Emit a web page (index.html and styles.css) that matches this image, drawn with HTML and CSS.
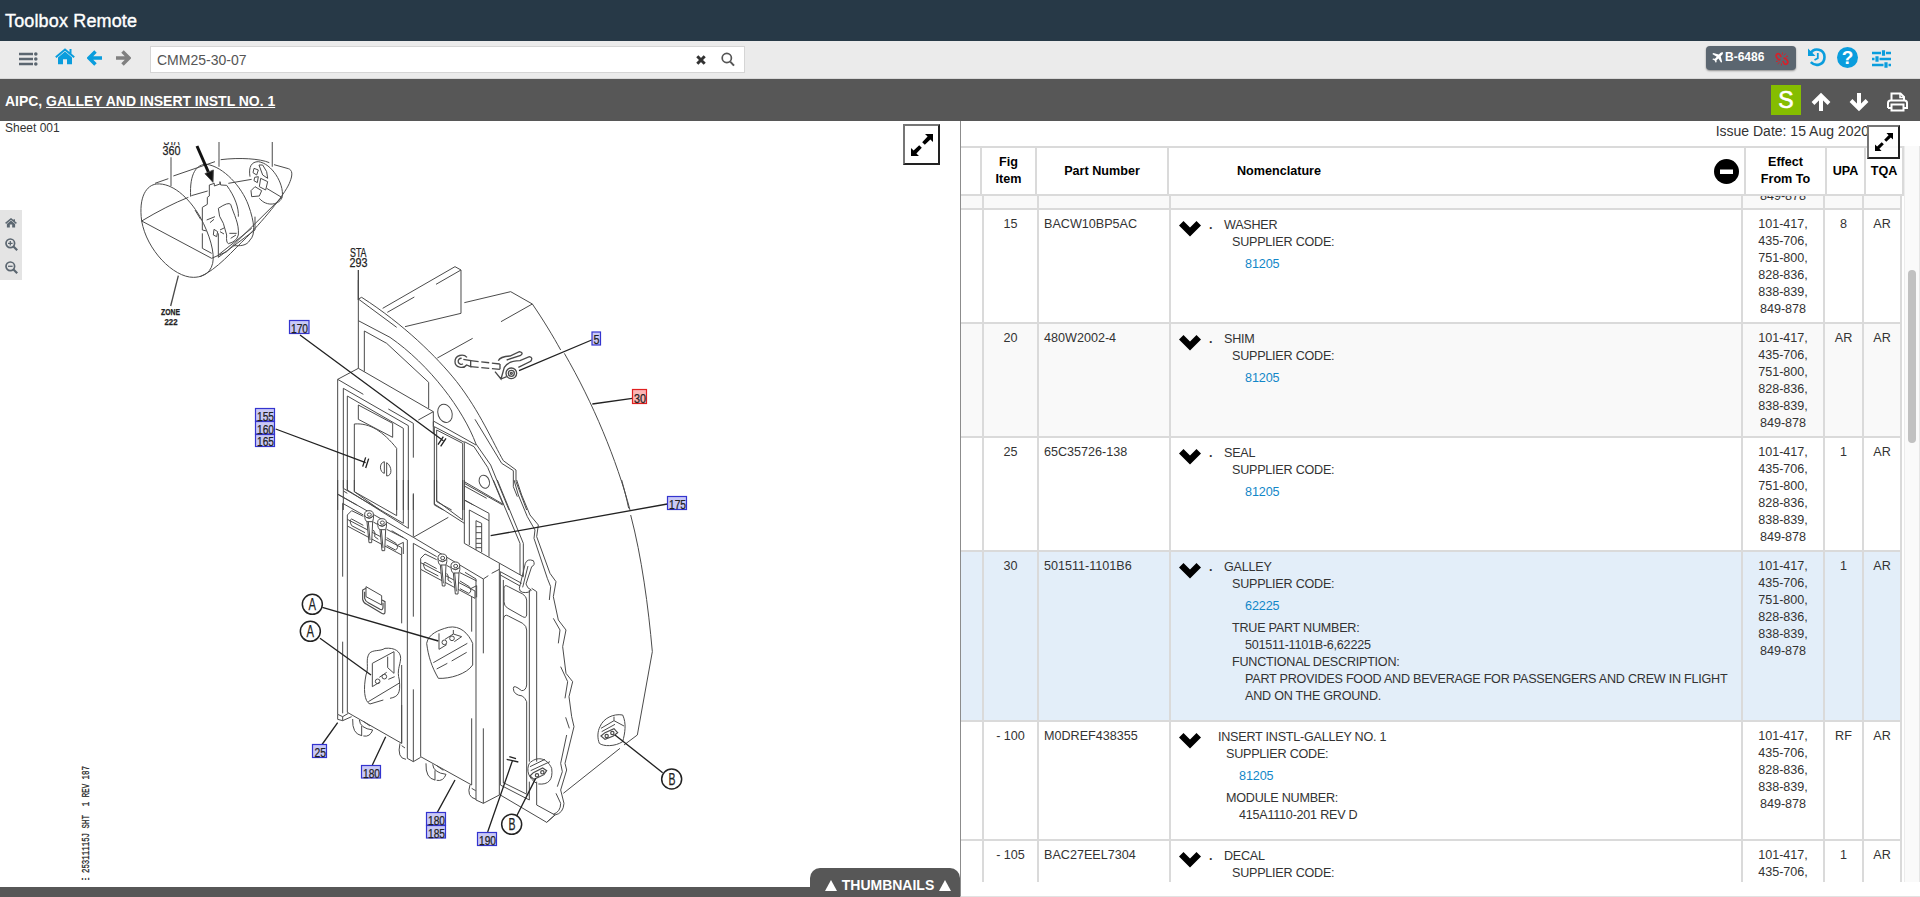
FILE: index.html
```html
<!DOCTYPE html>
<html lang="en">
<head>
<meta charset="utf-8">
<title>Toolbox Remote</title>
<link rel="stylesheet" href="styles.css">
</head>
<body>
<div class="app">
<header class="brand">Toolbox Remote</header>

<nav class="toolbar">
  <svg class="i-menu" width="20" height="16" viewBox="0 0 20 16"><path d="M0 3h14M0 8h14M0 13h14" stroke="#5b6670" stroke-width="2.4"/><g fill="#5b6670"><circle cx="16.8" cy="3" r="1.8"/><circle cx="16.8" cy="8" r="1.8"/><circle cx="16.8" cy="13" r="1.8"/></g></svg>
  <svg class="i-home" width="20" height="17" viewBox="0 0 20 17"><path d="M10 3.500 3 9.500v6.700h5v-5h4v5h5V9.500z" fill="#0a9ddd"/><path d="M.8 9.200 10 1.500l9.200 7.700M15.500 1v5" fill="none" stroke="#0a9ddd" stroke-width="2"/></svg>
  <svg class="i-back" width="16" height="16" viewBox="0 0 16 16"><path d="M8.500 1.500 2 8l6.500 6.500M2.500 8H15" fill="none" stroke="#0a9ddd" stroke-width="3.500"/></svg>
  <svg class="i-fwd" width="16" height="16" viewBox="0 0 16 16"><path d="M7.500 1.500 14 8l-6.500 6.500M13.500 8H1" fill="none" stroke="#808080" stroke-width="3.500"/></svg>
  <div class="search">
    <span class="query">CMM25-30-07</span>
    <svg class="i-clear" width="10" height="10" viewBox="0 0 10 10"><path d="m1.300 1.300 7.400 7.400m0-7.400L1.300 8.700" stroke="#333" stroke-width="3"/></svg>
    <svg width="14" height="15" viewBox="0 0 14 15"><circle cx="5.800" cy="6" r="4.600" fill="none" stroke="#555" stroke-width="1.700"/><path d="m9.200 9.600 3.800 4" stroke="#555" stroke-width="2"/></svg>
  </div>
  <div class="tail">
    <svg width="11" height="11" viewBox="0 0 11 11"><path d="M10.800.3C10 0 9 .3 8.300 1L6.800 2.500 1.300 1 .3 2l4.400 2.700L2.900 6.700 1.100 6.500.3 7.300l2.300 1.200 1.200 2.300.8-.8-.1-1.800 2-1.800L9.100 10.800l1-1L8.700 4.300l1.500-1.500C10.900 2.100 11.100 1 10.800.3z" fill="#fff"/></svg>
    <span>B-6486</span>
    <svg class="i-broken" width="14" height="14" viewBox="0 0 14 14"><g fill="none" stroke="#d8202a" stroke-width="1.700"><path d="M6.200 5 5 2.800C3.500.3.200 2.500 1.500 5l1.200 1.800c.9 1.200 2 1 2.700.5M7.800 9 9 11.200c1.500 2.500 4.800.3 3.500-2.200l-1.200-1.800c-.9-1.200-2-1-2.700-.5"/><path d="M7.500.5 7.300 2.500M9 3.200l1.600-1.700M2.800 12l1.700-1.600M6.500 11.500l-.2 2M11 4.500l2-.3M1 9.500l2-.3" stroke-width="1"/></g></svg>
  </div>
  <svg class="i-hist" width="18" height="20" viewBox="0 0 18 20"><path d="M2 7C6-.5 16.500 2 16.500 10S7.500 20 2.800 15.200" fill="none" stroke="#0a9ddd" stroke-width="2.600"/><path d="M0 1.500V9h7.500z" fill="#0a9ddd"/><path d="M9.800 6v5.200L6.500 13" fill="none" stroke="#0a9ddd" stroke-width="1.800"/></svg>
  <div class="help">?</div>
  <svg class="i-tune" width="19" height="18" viewBox="0 0 19 18"><path d="M0 3h19M0 9h19M0 15h19" stroke="#0a9ddd" stroke-width="2.500"/><path d="M11.500 0v6M5 6v6M14 12v6" stroke="#ebebeb" stroke-width="5"/><path d="M11.500.2v5.600M5 6.200v5.600M14 12.200v5.600" stroke="#0a9ddd" stroke-width="3.200"/></svg>
</nav>

<div class="docbar">
  <div class="doctitle">AIPC, <u>GALLEY AND INSERT INSTL NO. 1</u></div>
  <div class="sbtn">S</div>
  <svg class="i-up" width="20" height="20" viewBox="0 0 20 20"><path d="M2 11.500 10 3.500l8 8M10 4.500V19" fill="none" stroke="#fff" stroke-width="4"/></svg>
  <svg class="i-down" width="20" height="20" viewBox="0 0 20 20"><path d="M2 8.500 10 16.500l8-8M10 15.500V1" fill="none" stroke="#fff" stroke-width="4"/></svg>
  <svg class="i-print" width="21" height="20" viewBox="0 0 21 20"><path d="M4.500 9V1.500h9L17 5v4M4.500 12.500h12v6h-12z" fill="none" stroke="#fff" stroke-width="2"/><path d="M13 1.500V5.500h4" fill="none" stroke="#fff" stroke-width="1.500"/><path d="M1 16v-5q0-2.500 2.500-2.500h14q2.500 0 2.500 2.500v5h-3.500M1 16h3.500" fill="none" stroke="#fff" stroke-width="2"/></svg>
</div>

<main class="split">
<section class="figure">
  <svg class="drawing" width="960" height="766" viewBox="0 121 960 766">
    <defs>
      <g id="latch"><path d="M134 105Q134 122 141 125L147 188H155L158 125Q162 115 160 103Z" fill="#fff"/><ellipse cx="147" cy="103" rx="13" ry="11" fill="#fff"/><ellipse cx="148" cy="104" rx="6" ry="5"/><path d="M141 112Q148 120 156 110M145 125L150 180M141 125H158"/></g>
      <g id="toprail"><path d="M82 105V138L245 225V203L82 118M82 105L95 92 130 109M160 126L172 133M200 148L250 173M232 196L250 187V222M130 136L95 117Q86 120 95 137L135 158M160 150Q168 158 164 170L175 178M200 173L228 190Q238 205 226 210L200 196"/><use href="#latch"/><use href="#latch" x="39" y="24"/></g>
      <g id="wheel"><path d="M98 717Q96 762 125 767M118 720Q120 745 158 750Q150 772 130 768M125 738V768M130 724L150 738"/></g>
      <clipPath id="sheet"><rect x="0" y="142" width="960" height="738"/></clipPath>
    </defs>
    <g clip-path="url(#sheet)">
    <!-- fuselage key view -->
    <g class="ink" transform="translate(100 120) scale(.33333)">
      <path d="M125 303C115 230 140 195 170 192C215 188 265 230 300 290C330 345 345 400 338 430C330 465 300 472 280 472C220 472 140 390 125 303Z"/>
      <path d="M165 190L205 176M220 168L345 125M362 119C420 112 480 116 508 128M522 134L565 146C578 150 578 165 570 185C560 215 500 290 440 352C400 390 350 450 300 470"/>
      <path d="M272 230C268 160 290 132 320 133C370 140 425 200 445 255C465 310 466 345 450 360C440 378 420 378 400 377"/>
      <path d="M125 303Q200 258 265 232M274 227L323 213M385 190L455 178M125 303L335 415L380 395L545 232M355 340V412L465 330V290M355 405L455 325"/>
      <path d="M450 170C445 140 455 125 475 125C515 130 552 190 547 230C540 255 500 262 478 235M500 205L545 232M462 145L475 150L470 165L459 158ZM477 135L488 165L503 175L500 155L488 135ZM482 175L503 185L497 210L478 200ZM465 200L485 212L478 228L455 230L453 212ZM464 172L475 170L472 188L462 182Z"/>
      <path d="M307 262V330L320 333M307 340V385L335 400M307 262L322 253V232L328 228V195L343 190V198L360 192V185L362 195L380 196C405 230 417 265 415 290"/>
      <path d="M355 265Q385 245 392 253C402 285 418 310 415 345Q410 365 385 371Q378 368 380 345L370 310Q355 290 355 265M285 270L302 298M320 300L345 290M330 308L342 298M342 328L353 335L350 350L340 345ZM360 330L372 324M360 335L372 342M388 340H410M392 355L408 345"/>
      <g stroke="#777" stroke-width="4"><path d="M213 112V198M357 60V140M517 60V140"/></g>
      <path d="M291 78L329 165" stroke="#111" stroke-width="9"/><path d="M339 187L315 161L340 150Z" fill="#111"/>
      <path d="M235 467L212 558" stroke-width="4"/>
      <path d="M775 450V540" stroke-width="4"/>
    </g>
    <!-- overhead structure and upper cabinet -->
    <g class="ink" transform="translate(320 230) scale(.33333)">
      <path d="M115 150V415M115 207L230 292M115 207L125 202C250 282 350 380 410 455C480 545 520 640 550 692L588 720V755L620 840M465 568L545 700L580 722V770L592 800"/>
      <path d="M115 272L210 322C330 405 430 540 468 642L512 705L567 840M340 573L468 645M433 635L462 650L503 712L550 825M433 755L548 822M433 768L500 805M433 810L460 825"/>
      <path d="M133 425V303L200 340L326 457V535"/>
      <path d="M188 235L405 110L423 120V250L255 290M423 120L348 163M202 247L283 201M433 218L572 185L637 222L543 275M352 384L458 325M637 222C670 270 700 320 722 360M733 370C820 520 890 690 930 840"/>
      <path d="M53 840V448L115 415L340 545V610M340 545L295 570M53 448L130 493M205 537L280 580V683M280 793V840M70 840V475L265 587V840M82 783V498L250 595V840M70 783L82 790M115 525L218 580V622L115 568ZM103 785V582C150 578 190 605 230 655V840M103 785L180 840M53 793L110 825"/>
      <path d="M193 695C175 700 180 728 193 730ZM200 698C216 708 218 738 200 738Z"/>
      <path d="M343 590L433 637V840M343 590V825L370 840M350 600V815L395 840M350 600L428 640V840M340 575V590"/>
      <ellipse cx="375" cy="550" rx="21" ry="28" transform="rotate(-20 375 550)"/><ellipse cx="493" cy="755" rx="15" ry="20" transform="rotate(-20 493 755)"/>
      <g stroke-width="4"><path d="M441 382C430 370 405 375 405 395C405 412 430 418 440 405L452 410V392L430 388M425 385a9 9 0 1 0 4 16M540 402V418"/><path stroke-dasharray="24 8" d="M452 392L540 402M452 410L540 418"/><path d="M525 425L543 447L553 412Q565 392 600 392L628 380Q640 382 632 394L595 412M535 392Q540 380 570 378L598 365Q612 368 602 376L560 390M543 447L560 440"/><circle cx="574" cy="430" r="16"/><circle cx="574" cy="430" r="9"/><circle cx="574" cy="430" r="3"/></g>
    </g>
    <!-- lower cabinets and lining -->
    <g class="ink" transform="translate(320 480) scale(.33333)">
      <path d="M53 0V703M53 42L280 172L385 112M280 172L490 297L505 287M515 280L538 268M70 0V25L250 130V0M82 0V30L265 145V0M280 40V170M103 0V35L230 107V0"/>
      <path d="M68 290V70L130 105M215 152L262 180V835M68 485V700M53 703L68 710V722L53 718V703M68 722L95 710M68 710L85 700M82 138V697L245 790V675M245 225V430M245 555V790M262 835L280 845L302 832M280 410V190L350 230M435 277L468 297V960M280 628V845M302 268V830L455 915M455 350V455M455 715V915"/>
      <use href="#toprail"/><use href="#toprail" x="220" y="130"/>
      <path d="M490 297V520M490 745V970M468 960L490 970L538 945V250"/>
      <path d="M138 320L185 347V375L138 350Z"/><path d="M138 325L128 330V358Q130 368 140 373L185 400Q195 405 195 395V365L186 360M134 335V355Q136 364 145 368L180 388Q188 392 189 382V368" stroke-width="3.500"/>
      <path d="M148 520C160 508 180 515 195 505C225 502 242 515 242 535C240 560 230 570 238 600C242 640 235 650 210 655M190 660L150 672C132 665 130 625 138 585C148 560 135 540 148 520M157 620V550L222 515V580L203 563V530M157 620L178 607M178 592L200 577M205 598L224 590M145 665L240 608"/><circle cx="173" cy="604" r="7"/><circle cx="193" cy="590" r="7"/>
      <path d="M320 490C325 462 355 450 385 442C420 435 445 460 458 490V555C440 582 390 597 355 595C335 560 325 530 320 490ZM357 460V508L380 494M375 478L400 462L425 470L403 485M400 462V450M340 548L442 490M350 567L382 550M395 543L440 517"/><circle cx="373" cy="487" r="7"/><circle cx="396" cy="475" r="7"/>
      <use href="#wheel"/><use href="#wheel" x="220" y="133"/><path d="M240 790Q230 835 258 838M245 797L255 804M450 915Q438 950 468 958M455 925L467 932"/>
      <path d="M343 0V72L433 130M350 0V62L428 120V0M433 0V190L468 210L610 290M433 10L548 75M433 60L507 100V230M448 195V90L507 122M468 210V122L485 130V217M468 140H485M468 158H485M468 176H485M468 190H485M468 203H485M520 0L600 190V285M532 0L610 190V290"/>
      <path d="M541 275L605 310M541 285L600 318M541 275V915M550 910V300M635 325L650 335V845M628 330V845M650 905V975M628 905V960M541 915L628 960M550 908L625 945M541 945L680 1027M650 975L705 1005L680 1027"/>
      <path d="M552 325Q552 312 565 320L608 342Q620 350 620 360V405Q618 416 608 410L562 384Q552 377 552 365ZM550 420Q552 400 565 408L608 430Q620 438 620 450V615Q618 632 605 632Q580 612 580 625Q580 645 607 648Q616 655 620 665V940"/>
      <path d="M598 325L616 250Q622 235 640 242Q647 255 635 260L618 312Q622 326 634 330Q628 340 608 337Q598 335 598 325M608 322L624 258"/>
      <path d="M582 0L595 45L622 110L645 150L642 175L682 295L692 320L688 360M590 0L605 45L630 105L655 135L650 170L690 280L708 305L700 350L715 420L738 450L728 500L738 580L758 605L747 650L755 710L762 740L735 850L740 870L722 930L732 970Q730 1000 705 1005L680 1027M700 415L720 450L715 490M722 560L743 605L735 655M737 712L748 745M740 765L722 850L727 875L712 920M708 940L722 970Q722 995 700 1003"/>
      <path d="M905 0C912 25 921 60 926 85M932 105C965 230 985 380 997 515L952 765L912 795M900 805L730 940"/>
      <path d="M628 850C650 828 680 832 695 865C700 900 685 915 655 912M650 910C625 895 618 870 628 850M630 860L675 838M632 872L690 845M840 740C850 715 880 700 908 705C920 730 915 760 908 785C885 800 850 800 838 790C832 775 832 755 840 740M843 745L882 722V710M845 755L885 733M882 722L912 738"/>
      <g stroke-width="3.500"><path d="M630 888L640 878L668 864L680 872L672 884L642 898ZM843 768L855 758L882 746L893 758L880 768L855 778Z"/><circle cx="651" cy="886" r="5"/><circle cx="667" cy="877" r="5"/><circle cx="860" cy="768" r="5"/><circle cx="877" cy="759" r="5"/></g>
    </g>
    <!-- leaders and view bubbles -->
    <g class="leader" transform="translate(320 480) scale(.33333)">
      <path d="M7 382L355 483M0 475L153 585M53 728L5 795M197 770L157 855M405 900L352 997M577 843L503 1056M560 838L595 846M568 830L588 836M647 895L590 1008M885 765L1028 878M512 167L1042 72"/>
      <path d="M-60 -435L370 -118M-133 -153L137 -52M354 -106L370 -130M362 -101L378 -125M128 -40L137 -68M137 -36L146 -64"/>
      <path d="M597 -328L815 -420M817 -228L937 -245"/>
      <circle cx="-23" cy="373" r="30"/><circle cx="-29" cy="454" r="30"/><circle cx="1055" cy="897" r="30"/><circle cx="575" cy="1033" r="30"/>
    </g>
    <g class="dtext bubble">
      <text x="308.500" y="610" textLength="7.500" lengthAdjust="spacingAndGlyphs">A</text><text x="306.500" y="637" textLength="7.500" lengthAdjust="spacingAndGlyphs">A</text>
      <text x="668.500" y="784.500" textLength="7" lengthAdjust="spacingAndGlyphs">B</text><text x="508.500" y="830" textLength="7" lengthAdjust="spacingAndGlyphs">B</text>
    </g>
    <g class="dtext">
      <text x="163.500" y="144.500" textLength="16" lengthAdjust="spacingAndGlyphs">STA</text><text x="162.500" y="155" textLength="18" lengthAdjust="spacingAndGlyphs">360</text>
      <text x="350" y="256.500" textLength="16.500" lengthAdjust="spacingAndGlyphs">STA</text><text x="349.500" y="267" textLength="18" lengthAdjust="spacingAndGlyphs">293</text>
    </g>
    <g class="dtext zone"><text x="161" y="315" textLength="19" lengthAdjust="spacingAndGlyphs">ZONE</text><text x="164.500" y="325" textLength="13" lengthAdjust="spacingAndGlyphs">222</text></g>
    <g class="hot">
      <rect x="289.500" y="320.500" width="19.500" height="13"/><rect x="255.500" y="408.500" width="19" height="12.500"/><rect x="255.500" y="421.500" width="19" height="12.500"/><rect x="255.500" y="434.500" width="19" height="12"/>
      <rect x="592" y="332" width="8.500" height="13"/><rect x="667.500" y="496.500" width="19" height="13"/><rect x="312.500" y="744.500" width="14" height="13"/><rect x="361.500" y="765.500" width="19" height="12.500"/>
      <rect x="426.500" y="812.500" width="19" height="12.500"/><rect x="426.500" y="825.500" width="19" height="12.500"/><rect x="477.500" y="832.500" width="19" height="13"/><rect class="sel" x="632.500" y="389.500" width="14" height="14"/>
    </g>
    <g class="dtext">
      <text x="291" y="333" textLength="17" lengthAdjust="spacingAndGlyphs">170</text><text x="257" y="420.500" textLength="17" lengthAdjust="spacingAndGlyphs">155</text><text x="257" y="433.500" textLength="17" lengthAdjust="spacingAndGlyphs">160</text><text x="257" y="446" textLength="17" lengthAdjust="spacingAndGlyphs">165</text>
      <text x="593.500" y="344" textLength="6" lengthAdjust="spacingAndGlyphs">5</text><text x="634" y="402.500" textLength="12" lengthAdjust="spacingAndGlyphs">30</text><text x="669" y="509" textLength="17" lengthAdjust="spacingAndGlyphs">175</text><text x="314.500" y="757" textLength="11.500" lengthAdjust="spacingAndGlyphs">25</text>
      <text x="363" y="777.500" textLength="17" lengthAdjust="spacingAndGlyphs">180</text><text x="428" y="825" textLength="17" lengthAdjust="spacingAndGlyphs">180</text><text x="428" y="837.500" textLength="17" lengthAdjust="spacingAndGlyphs">185</text><text x="479" y="845" textLength="17" lengthAdjust="spacingAndGlyphs">190</text>
    </g>
    <text class="dtext sheetno" transform="translate(89 882) rotate(-90)" textLength="116" lengthAdjust="spacingAndGlyphs" xml:space="preserve">E 25311115J SHT  1 REV 187</text>
    </g>
  </svg>
  <div class="sheetname">Sheet 001</div>
  <div class="zoombar">
    <svg width="12" height="10" viewBox="0 0 20 17"><path d="M10 4.200 3 10v6.200h5v-5h4v5h5V10z" fill="#5b6670"/><path d="M.8 9.200 10 1.500l9.200 7.700M15.500 2v4" fill="none" stroke="#5b6670" stroke-width="2.400"/></svg>
    <svg width="13" height="13" viewBox="0 0 13 13"><g fill="none" stroke="#5b6670"><circle cx="5.300" cy="5.300" r="4.300" stroke-width="1.700"/><path d="m8.500 8.500 3.700 3.700" stroke-width="2.200"/><path d="M3 5.300h4.600M5.300 3v4.600" stroke-width="1.300"/></g></svg>
    <svg width="13" height="13" viewBox="0 0 13 13"><g fill="none" stroke="#5b6670"><circle cx="5.300" cy="5.300" r="4.300" stroke-width="1.700"/><path d="m8.500 8.500 3.700 3.700" stroke-width="2.200"/><path d="M3 5.300h4.600" stroke-width="1.300"/></g></svg>
  </div>
  <div class="expand left"><svg width="22" height="22" viewBox="0 0 22 22"><path d="M14 0h8v8l-2.600-2.600-5.600 5.400-2.600-2.600 5.400-5.600zM8 22H0v-8l2.600 2.600 5.600-5.400 2.600 2.600-5.400 5.600z" fill="#000"/></svg></div>
  <div class="thumbs"><i class="tri"></i><span>THUMBNAILS</span><i class="tri"></i></div>
</section>

<section class="parts">
  <div class="issue">Issue Date: 15 Aug 2020</div>
  <div class="expand right"><svg width="18" height="18" viewBox="0 0 22 22"><path d="M14 0h8v8l-2.600-2.600-5.600 5.400-2.600-2.600 5.400-5.600zM8 22H0v-8l2.600 2.600 5.600-5.400 2.600 2.600-5.400 5.600z" fill="#000"/></svg></div>
  <div class="tablewrap">
    <div class="table">
      <div class="row head">
        <div></div><div>Fig<br>Item</div><div>Part Number</div>
        <div class="nomhead"><span>Nomenclature</span><svg width="25" height="25" viewBox="0 0 25 25"><circle cx="12.500" cy="12.500" r="12.500"/><path d="M6 10.500h13v4.500H6z" fill="#fff"/></svg></div>
        <div>Effect<br>From To</div><div>UPA</div><div>TQA</div>
      </div>
      <div class="rows">
        <div class="row alt cut"><div></div><div></div><div></div><div></div><div class="eff"><span>849-878</span></div><div></div><div></div></div>
        <div class="row"><div></div><div>15</div><div>BACW10BP5AC</div>
          <div class="nom"><svg class="chev" viewBox="0 0 22 16"><path d="M0 4.500 4.500 0 11 6.500 17.500 0 22 4.500 11 15.500z"/></svg><b>.</b><div class="desc"><p>WASHER</p><p class="k">SUPPLIER CODE:</p><a>81205</a></div></div>
          <div>101-417,<br>435-706,<br>751-800,<br>828-836,<br>838-839,<br>849-878</div><div>8</div><div>AR</div></div>
        <div class="row alt"><div></div><div>20</div><div>480W2002-4</div>
          <div class="nom"><svg class="chev" viewBox="0 0 22 16"><path d="M0 4.500 4.500 0 11 6.500 17.500 0 22 4.500 11 15.500z"/></svg><b>.</b><div class="desc"><p>SHIM</p><p class="k">SUPPLIER CODE:</p><a>81205</a></div></div>
          <div>101-417,<br>435-706,<br>751-800,<br>828-836,<br>838-839,<br>849-878</div><div>AR</div><div>AR</div></div>
        <div class="row"><div></div><div>25</div><div>65C35726-138</div>
          <div class="nom"><svg class="chev" viewBox="0 0 22 16"><path d="M0 4.500 4.500 0 11 6.500 17.500 0 22 4.500 11 15.500z"/></svg><b>.</b><div class="desc"><p>SEAL</p><p class="k">SUPPLIER CODE:</p><a>81205</a></div></div>
          <div>101-417,<br>435-706,<br>751-800,<br>828-836,<br>838-839,<br>849-878</div><div>1</div><div>AR</div></div>
        <div class="row picked"><div></div><div>30</div><div>501511-1101B6</div>
          <div class="nom"><svg class="chev" viewBox="0 0 22 16"><path d="M0 4.500 4.500 0 11 6.500 17.500 0 22 4.500 11 15.500z"/></svg><b>.</b><div class="desc"><p>GALLEY</p><p class="k">SUPPLIER CODE:</p><a>62225</a><p class="k">TRUE PART NUMBER:</p><p class="v">501511-1101B-6,62225</p><p class="k">FUNCTIONAL DESCRIPTION:</p><p class="v">PART PROVIDES FOOD AND BEVERAGE FOR PASSENGERS AND CREW IN FLIGHT<br>AND ON THE GROUND.</p></div></div>
          <div>101-417,<br>435-706,<br>751-800,<br>828-836,<br>838-839,<br>849-878</div><div>1</div><div>AR</div></div>
        <div class="row"><div></div><div>- 100</div><div>M0DREF438355</div>
          <div class="nom top"><svg class="chev" viewBox="0 0 22 16"><path d="M0 4.500 4.500 0 11 6.500 17.500 0 22 4.500 11 15.500z"/></svg><b></b><div class="desc"><p>INSERT INSTL-GALLEY NO. 1</p><p class="k">SUPPLIER CODE:</p><a>81205</a><p class="k">MODULE NUMBER:</p><p class="v">415A1110-201 REV D</p></div></div>
          <div>101-417,<br>435-706,<br>828-836,<br>838-839,<br>849-878</div><div>RF</div><div>AR</div></div>
        <div class="row"><div></div><div>- 105</div><div>BAC27EEL7304</div>
          <div class="nom"><svg class="chev" viewBox="0 0 22 16"><path d="M0 4.500 4.500 0 11 6.500 17.500 0 22 4.500 11 15.500z"/></svg><b>.</b><div class="desc"><p>DECAL</p><p class="k">SUPPLIER CODE:</p></div></div>
          <div>101-417,<br>435-706,</div><div>1</div><div>AR</div></div>
      </div>
    </div>
    <div class="scroll"><div class="thumb"></div></div>
  </div>
</section>
</main>
</div>
</body>
</html>
```
FILE: styles.css
```css
* { box-sizing: border-box; }
body { margin: 0; background: #fff; color: #333; font-family: "Liberation Sans", Arial, sans-serif; font-size: 12.6px; line-height: 17px; }
p { margin: 0; }
svg { display: block; flex: none; }
.app { width: 1920px; height: 897px; overflow: hidden; display: flex; flex-direction: column; }

.brand { height: 41px; flex: none; background: #273947; color: #fff; font-size: 18px; letter-spacing: .15px; line-height: 42px; padding-left: 5px; -webkit-text-stroke: .4px #fff; }

.toolbar { height: 38px; flex: none; background: #ebebeb; border-bottom: 1px solid #d8d8d8; display: flex; align-items: flex-start; padding-left: 19px; }
.i-menu { margin-top: 10px; }
.i-home { margin: 7px 0 0 16px; }
.i-back { margin: 9px 0 0 12px; }
.i-fwd { margin: 9px 0 0 12px; }
.search { margin: 5px 0 0 19px; width: 595px; height: 27px; border: 1px solid #d5d5d5; background: #fff; display: flex; align-items: center; padding: 0 9px 0 6px; }
.query { flex: 1; font-size: 14px; color: #555; padding-top: 1px; }
.i-clear { margin-right: 15px; }
.tail { margin: 5px 0 0 auto; width: 90px; height: 24px; background: #5b6670; border-radius: 4px; box-shadow: 0 1px 2px rgba(0,0,0,.4); color: #fff; font-weight: bold; font-size: 12px; display: flex; align-items: center; padding-left: 6px; gap: 2px; padding-bottom: 2px; }
.i-broken { margin: 3px 0 0 9px; }
.i-hist { margin: 6px 0 0 12px; }
.help { width: 21px; height: 21px; margin: 6px 0 0 11px; border-radius: 50%; background: #0a9ddd; color: #fff; font-weight: bold; font-size: 19px; line-height: 22px; text-align: center; }
.i-tune { margin: 9px 29px 0 14px; }

.docbar { height: 42px; flex: none; background: #575757; display: flex; align-items: flex-start; color: #fff; }
.doctitle { flex: 1; padding: 14px 0 0 5px; font-size: 14px; letter-spacing: -.03px; font-weight: bold; }
.sbtn { width: 30px; height: 30px; margin: 6px 10px 0 0; background: #85bd00; font-size: 23px; line-height: 31px; text-align: center; -webkit-text-stroke: .6px #fff; }
.i-up { margin: 13px 18px 0 0; }
.i-down { margin: 13px 18px 0 0; }
.i-print { margin: 13px 12px 0 0; }

.split { height: 776px; flex: none; display: flex; }
.figure { width: 960px; height: 776px; position: relative; border-bottom: 10px solid #575757; }
.sheetname { position: absolute; left: 5px; top: 0; font-size: 12px; line-height: 14px; }
.zoombar { position: absolute; left: 0; top: 89px; width: 22px; height: 70px; background: #e4e4e4; display: flex; flex-direction: column; align-items: center; justify-content: space-between; padding: 8px 0 6px; }
.expand { position: absolute; display: flex; align-items: center; justify-content: center; border: 2px solid #767676; border-right-color: #222; border-bottom-color: #222; }
.expand.left { left: 903px; top: 3px; width: 37px; height: 41px; }
.expand.right { left: 906px; top: 4px; width: 33px; height: 34px; z-index: 2; background: rgba(255,255,255,.85); }
.thumbs { position: absolute; right: 0; bottom: -10px; width: 150px; height: 29px; background: #575757; border-radius: 10px 10px 0 0; color: #fff; font-size: 14px; font-weight: bold; display: flex; align-items: center; justify-content: center; gap: 5px; padding: 5px 0 0 6px; }
.tri { border: 6px solid transparent; border-top: 0; border-bottom: 11px solid #fff; }

.ink { fill: none; stroke: #4a4a4a; stroke-width: 3; }
.leader { fill: none; stroke: #222; stroke-width: 4; }
.leader circle { stroke-width: 4.500; }
.dtext { font-family: "Liberation Sans", Arial, sans-serif; font-size: 12px; fill: #222; stroke: #222; stroke-width: .25; }
.bubble { font-size: 17px; }
.zone { font-size: 9px; font-weight: bold; }
.sheetno { font-family: "Liberation Mono", monospace; font-size: 10px; }
.hot rect { fill: #c9c9f6; stroke: #3434cf; stroke-width: 1.200; }
.hot .sel { fill: #fbb5b5; stroke: #e02020; }

.parts { width: 960px; height: 776px; position: relative; border-left: 1px solid #8c8c8c; border-bottom: 1px solid #e2e2e2; display: flex; flex-direction: column; }
.issue { height: 25px; flex: none; padding: 2px 51px 0 0; text-align: right; font-size: 14px; line-height: 17px; }
.tablewrap { height: 736px; display: flex; }
.table { width: 943px; border-top: 2px solid #dadada; display: flex; flex-direction: column; }
.rows { overflow: hidden; flex: 1; }
.row { display: grid; grid-template-columns: 23px 55px 132px 572px 82px 39px 38px; width: 941px; border-bottom: 2px solid #dadada; min-height: 114px; }
.row > div { border-right: 2px solid #dadada; padding-top: 6px; text-align: center; }
.row > div:nth-child(3) { text-align: left; padding-left: 5px; }
.alt { background: #f9f9f9; }
.picked { background: #e3eef9; }
.head { grid-template-columns: 21px 55px 132px 577px 81px 39px 38px; width: 943px; height: 48px; min-height: 48px; font-weight: bold; color: #000; }
.head > div { display: flex; align-items: center; justify-content: center; padding: 0; }
.head > div:nth-child(3) { padding: 0; }
.head .nomhead { justify-content: flex-end; padding-right: 5px; }
.nomhead span { margin-right: 393px; }
.cut { min-height: 14px; height: 14px; }
.cut > div { padding: 0; overflow: hidden; }
.eff span { display: block; margin-top: -8px; }
.row > .nom { display: flex; text-align: left; padding: 7px 0 15px 8px; }
.chev { width: 22px; height: 16px; margin-top: 4px; }
.nom b { width: 23px; padding-left: 8px; }
.desc { letter-spacing: -.24px; }
.desc .k { padding-left: 8px; }
.desc .v { padding-left: 21px; }
.desc a { display: block; padding: 5px 0 5px 21px; color: #1287c8; letter-spacing: -.1px; }
.top b { width: 17px; }
.scroll { width: 16px; background: #fafafa; border-left: 1px solid #ececec; border-right: 1px solid #e6e6e6; padding: 124px 0 0 3px; }
.thumb { width: 8px; height: 173px; border-radius: 4px; background: #c1c1c1; }
```
